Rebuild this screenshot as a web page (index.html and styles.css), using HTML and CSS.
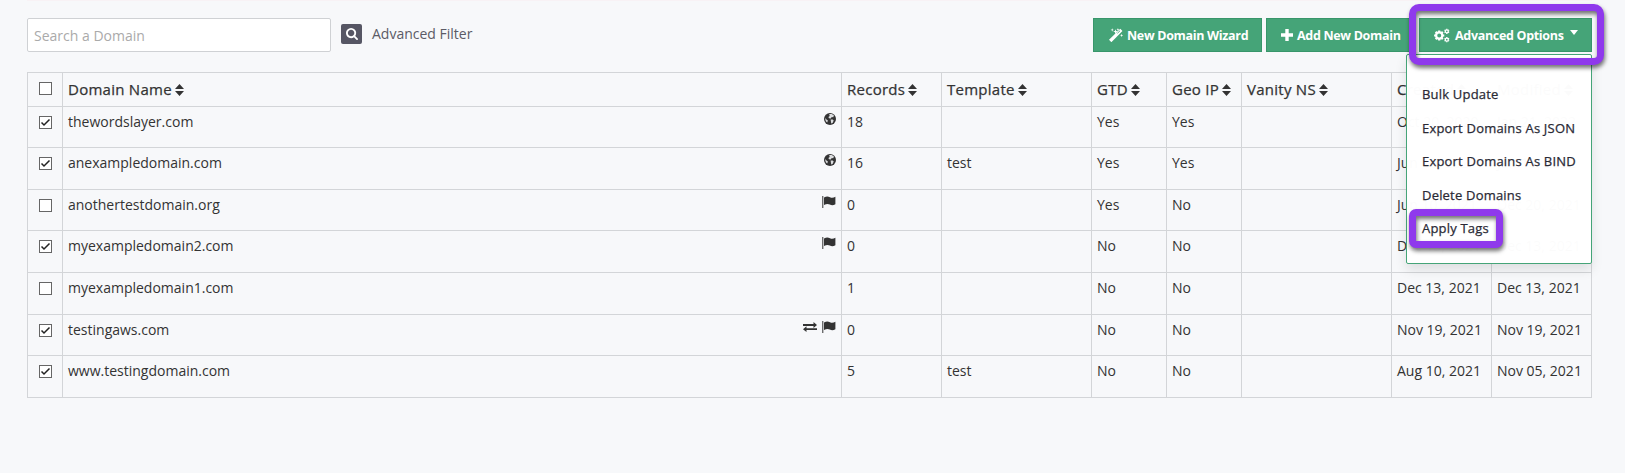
FILE: index.html
```html
<!DOCTYPE html>
<html lang="en">
<head>
    <meta charset="UTF-8">
    <meta name="viewport" content="width=device-width, initial-scale=1.0">
    <title>Domains</title>
    <link rel="stylesheet" href="styles.css">
</head>
<body>
    <!-- Icon set -->
    <svg class="icon-defs" width="0" height="0">
        <symbol id="i-search" viewBox="0 0 1664 1664"><path d="M1152 704q0-185-131.500-316.500t-316.500-131.500-316.500 131.500-131.500 316.500 131.500 316.500 316.500 131.500 316.500-131.500 131.500-316.500zm512 832q0 52-38 90t-90 38q-54 0-90-38l-343-342q-179 124-399 124-143 0-273.500-55.500t-225-150-150-225-55.500-273.500 55.500-273.500 150-225 225-150 273.500-55.500 273.500 55.500 225 150 150 225 55.500 273.500q0 220-124 399l343 343q37 37 37 90z"/></symbol>
        <symbol id="i-sort" viewBox="0 0 9 12"><path d="M0 5 4.500 0 9 5zM0 7h9l-4.500 5z"/></symbol>
        <symbol id="i-globe" viewBox="0 0 12 12"><circle cx="6" cy="6" r="6"/><path class="cut" d="M5.200 1 7.800.9 10 2.400 9.200 4.300 7.700 4.100 6.800 5.500 5 5.200 4.400 3.900 5.700 3.100zM6.600 6.600 8.700 6.400 9.700 7.600 8.600 10 7.200 10.600 6.900 8.600zM1 5.100 2.500 6.500 3.900 7.600 3.200 9.600 1.800 8.300z"/></symbol>
        <symbol id="i-flag" viewBox="0 0 14 12"><path d="M0.300 0h1v12h-1zM2 1.500C4.500.2 6 .3 8 1.300c2 .9 3.500.5 5.400-.5v7.400c-2 1.100-3.600 1.300-5.600.4C6 7.700 4.300 7.900 2 9.100z"/></symbol>
        <symbol id="i-exchange" viewBox="0 0 14 10"><path d="M0 2h10.500V0L14 3l-3.500 3V4H0zM14 6.200H3.500V4.300L0 7.200l3.500 2.800V8.100H14z"/></symbol>
        <symbol id="i-magic" viewBox="0 0 13 13"><path d="M0 11 10.500.8l2 2L2.200 13.200zM3 .2l.4 1.200 1.200.4-1.200.4L3 3.400l-.4-1.200-1.200-.4 1.200-.4zM6 1.100l.6 1.700 1.700.5-1.700.6L6 5.600l-.5-1.700-1.600-.6 1.600-.5zM8.300.1l.4 1 1 .4-1 .4-.4 1-.4-1-1-.4 1-.4zM11.700 5.400l.4 1.100 1.100.4-1.100.4-.4 1.200-.4-1.200-1.200-.4 1.200-.4z"/><path class="slit" d="M7.800 4.900 10.300 2.500"/></symbol>
        <symbol id="i-plus" viewBox="0 0 12 12"><path d="M4.300 0h3.400v4.300H12v3.400H7.700V12H4.300V7.700H0V4.300h4.300z"/></symbol>
        <symbol id="i-cogs" viewBox="0 0 16 14"><circle cx="5.200" cy="7" r="3.100" class="ring"/><path class="teeth" d="M5.200 1.900v2M5.200 10.100v2M.1 7h2M8.300 7h2M1.600 3.400 3 4.800M7.400 9.200l1.400 1.400M8.800 3.400 7.400 4.800M3 9.200l-1.400 1.400"/><circle cx="12.800" cy="2.800" r="1.500" class="ring small"/><path class="teeth small" d="M12.800.2v1M12.800 4.400v1M10.500 1.500l.9.500M14.200 3.600l.9.500M15.100 1.500l-.9.500M11.400 3.600l-.9.500"/><circle cx="12.800" cy="11.200" r="1.500" class="ring small"/><path class="teeth small" d="M12.800 8.600v1M12.800 12.800v1M10.500 9.900l.9.500M14.200 12l.9.500M15.100 9.900l-.9.500M11.400 12l-.9.500"/></symbol>
    </svg>

    <div class="page">
        <!-- Toolbar -->
        <div class="toolbar">
            <input type="text" class="search-input" placeholder="Search a Domain">
            <a class="advanced-filter">
                <span class="filter-icon"><svg><use href="#i-search"/></svg></span>
                Advanced Filter
            </a>
            <div class="actions">
                <button class="btn"><svg class="magic"><use href="#i-magic"/></svg>New Domain Wizard</button>
                <button class="btn btn-add"><svg class="plus"><use href="#i-plus"/></svg>Add New Domain</button>
                <div class="dropdown">
                    <button class="btn btn-options"><svg class="cogs"><use href="#i-cogs"/></svg>Advanced Options<span class="caret"></span></button>
                    <ul class="dropdown-menu">
                        <li>Bulk Update</li>
                        <li>Export Domains As JSON</li>
                        <li>Export Domains As BIND</li>
                        <li>Delete Domains</li>
                        <li class="marked">Apply Tags</li>
                    </ul>
                    <div class="marker"></div>
                </div>
            </div>
        </div>

        <!-- Domains -->
        <table class="domains">
            <colgroup>
                <col class="c-check"><col class="c-name"><col class="c-date"><col class="c-wide"><col class="c-flag"><col class="c-flag"><col class="c-wide"><col class="c-date"><col class="c-date">
            </colgroup>
            <thead>
                <tr>
                    <th><span class="check"></span></th>
                    <th>Domain Name<svg class="sort"><use href="#i-sort"/></svg></th>
                    <th>Records<svg class="sort"><use href="#i-sort"/></svg></th>
                    <th>Template<svg class="sort"><use href="#i-sort"/></svg></th>
                    <th>GTD<svg class="sort"><use href="#i-sort"/></svg></th>
                    <th>Geo IP<svg class="sort"><use href="#i-sort"/></svg></th>
                    <th>Vanity NS<svg class="sort"><use href="#i-sort"/></svg></th>
                    <th>Created<svg class="sort"><use href="#i-sort"/></svg></th>
                    <th>Modified<svg class="sort"><use href="#i-sort"/></svg></th>
                </tr>
            </thead>
            <tbody>
                <tr class="short">
                    <td><span class="check"><svg viewBox="0 0 11 11"><path d="M1.500 5.500 4 8l5.500-5.500"/></svg></span></td>
                    <td><div class="name">thewordslayer.com<span class="tags"><svg class="globe"><use href="#i-globe"/></svg></span></div></td>
                    <td>18</td><td></td><td>Yes</td><td>Yes</td><td></td><td>Oct 20, 2020</td><td>Jan 21, 2022</td>
                </tr>
                <tr>
                    <td><span class="check"><svg viewBox="0 0 11 11"><path d="M1.500 5.500 4 8l5.500-5.500"/></svg></span></td>
                    <td><div class="name">anexampledomain.com<span class="tags"><svg class="globe"><use href="#i-globe"/></svg></span></div></td>
                    <td>16</td><td>test</td><td>Yes</td><td>Yes</td><td></td><td>Jun 10, 2021</td><td>Jan 10, 2022</td>
                </tr>
                <tr class="short">
                    <td><span class="check"></span></td>
                    <td><div class="name">anothertestdomain.org<span class="tags"><svg class="flag"><use href="#i-flag"/></svg></span></div></td>
                    <td>0</td><td></td><td>Yes</td><td>No</td><td></td><td>Jun 10, 2021</td><td>Dec 20, 2021</td>
                </tr>
                <tr>
                    <td><span class="check"><svg viewBox="0 0 11 11"><path d="M1.500 5.500 4 8l5.500-5.500"/></svg></span></td>
                    <td><div class="name">myexampledomain2.com<span class="tags"><svg class="flag"><use href="#i-flag"/></svg></span></div></td>
                    <td>0</td><td></td><td>No</td><td>No</td><td></td><td>Dec 13, 2021</td><td>Dec 13, 2021</td>
                </tr>
                <tr>
                    <td><span class="check"></span></td>
                    <td><div class="name">myexampledomain1.com</div></td>
                    <td>1</td><td></td><td>No</td><td>No</td><td></td><td>Dec 13, 2021</td><td>Dec 13, 2021</td>
                </tr>
                <tr class="short">
                    <td><span class="check"><svg viewBox="0 0 11 11"><path d="M1.500 5.500 4 8l5.500-5.500"/></svg></span></td>
                    <td><div class="name">testingaws.com<span class="tags"><svg class="exchange"><use href="#i-exchange"/></svg><svg class="flag"><use href="#i-flag"/></svg></span></div></td>
                    <td>0</td><td></td><td>No</td><td>No</td><td></td><td>Nov 19, 2021</td><td>Nov 19, 2021</td>
                </tr>
                <tr>
                    <td><span class="check"><svg viewBox="0 0 11 11"><path d="M1.500 5.500 4 8l5.500-5.500"/></svg></span></td>
                    <td><div class="name">www.testingdomain.com</div></td>
                    <td>5</td><td>test</td><td>No</td><td>No</td><td></td><td>Aug 10, 2021</td><td>Nov 05, 2021</td>
                </tr>
            </tbody>
        </table>
    </div>
</body>
</html>
```

FILE: styles.css
```css
:root {
    --green: #45a478;
    --green-dark: #38966b;
    --purple: #8f39ec;
    --line: #d3d5d8;
    --text: #333;
    --bg: #f7f8fa;
}

* {
    box-sizing: border-box;
    margin: 0;
    padding: 0;
}

body {
    font-family: 'Open Sans', 'Noto Sans', sans-serif;
    font-size: 14px;
    line-height: 20px;
    color: var(--text);
    background: var(--bg);
    overflow: hidden;
}

svg {
    fill: currentColor;
    flex: none;
}

.icon-defs {
    position: absolute;
}

.page {
    margin: 0 33px 0 27px;
    border-top: 1px solid #f8f2f5;
    padding-top: 17px;
}

/* Toolbar */
.toolbar {
    display: flex;
    height: 34px;
    margin-bottom: 20px;
}

.search-input {
    width: 304px;
    height: 34px;
    padding: 0 6px;
    border: 1px solid #cfd1d4;
    border-radius: 2px;
    background: white;
    font: inherit;
}

.search-input::placeholder {
    color: #aaa;
}

.advanced-filter {
    display: flex;
    align-items: center;
    gap: 10px;
    height: 32px;
    margin-left: 10px;
    color: #5b5b66;
}

.filter-icon {
    display: flex;
    align-items: center;
    justify-content: center;
    width: 21px;
    height: 20px;
    border-radius: 2px;
    background: #565664;
    color: white;
}

.filter-icon svg {
    width: 12px;
    height: 12px;
}

.actions {
    display: flex;
    gap: 4px;
    margin-left: auto;
}

.btn {
    display: flex;
    align-items: center;
    width: 169px;
    height: 34px;
    padding: 1px 0 0 15px;
    border: 1px solid var(--green-dark);
    background: var(--green);
    color: white;
    font: 700 12.500px/20px 'Open Sans', 'Noto Sans', sans-serif;
    letter-spacing: -0.32px;
    white-space: nowrap;
}

.btn-add {
    width: 149px;
    padding-left: 14px;
}

.btn-options {
    width: 173px;
    padding-left: 14px;
}

.magic {
    width: 14px;
    height: 14px;
    margin: -2px 4px 0 0;
}

.plus {
    width: 12px;
    height: 12px;
    margin: -2px 4px 0 0;
}

.cogs {
    width: 16px;
    height: 15px;
    margin: -1px 5px 0 0;
}

.slit,
.ring,
.teeth {
    fill: none;
    stroke: white;
    stroke-width: 2.2;
}

.slit {
    stroke: var(--green);
    stroke-width: 0.8;
}

.ring.small,
.teeth.small {
    stroke-width: 1.3;
}

.caret {
    margin: -7px 0 0 6px;
    border: 4.5px solid transparent;
    border-top: 5px solid white;
    border-bottom: 0;
}

/* Dropdown */
.dropdown {
    position: relative;
}

.dropdown-menu {
    position: absolute;
    top: 36px;
    right: 0;
    width: 186px;
    height: 210px;
    padding: 23px 0 0 15px;
    border: 1px solid var(--green);
    border-radius: 2px;
    background: rgba(255, 255, 255, 0.985);
    box-shadow: 0 6px 12px rgba(0, 0, 0, 0.1);
    list-style: none;
    font-size: 13px;
    font-weight: 500;
    line-height: 33.500px;
    letter-spacing: 0.2px;
    -webkit-text-stroke: 0.25px currentColor;
    white-space: nowrap;
    color: #2a2a35;
}

.marker,
.marked::before {
    content: '';
    position: absolute;
    box-sizing: border-box;
    border: 7px solid var(--purple);
    border-radius: 10px;
    filter: drop-shadow(1px 3px 2px rgba(0, 0, 0, 0.55));
}

.marker {
    top: -14px;
    left: -10px;
    width: 195px;
    height: 61px;
}

.marked::before {
    top: 154px;
    left: 2px;
    width: 94px;
    height: 39px;
    border-radius: 7px;
}

/* Table */
.domains {
    width: 1565px;
    border-collapse: collapse;
    table-layout: fixed;
}

.domains th,
.domains td {
    border: 1px solid var(--line);
    padding: 5px 0 0 5px;
    text-align: left;
    vertical-align: top;
    white-space: nowrap;
}

.domains th {
    height: 34px;
    padding-top: 6px;
    font-size: 15px;
    font-weight: 500;
    letter-spacing: 0.26px;
    -webkit-text-stroke: 0.25px currentColor;
}

.domains td {
    height: 42px;
}

.domains .short td {
    height: 41px;
}

.c-check { width: 35px; }
.c-name { width: 779px; }
.c-date { width: 100px; }
.c-wide { width: 150px; }
.c-flag { width: 75px; }

.sort {
    width: 9px;
    height: 12px;
    margin-left: 3px;
    vertical-align: -1px;
}

.check {
    display: block;
    width: 13px;
    height: 13px;
    margin: 4px 0 0 6px;
    border: 1px solid #666;
    background: white;
}

th .check {
    margin-top: 3px;
}

.check svg {
    display: block;
    width: 11px;
    height: 11px;
    fill: none;
    stroke: #222;
    stroke-width: 1.5;
}

.name {
    display: flex;
    justify-content: space-between;
    padding-right: 5px;
}

.tags {
    display: flex;
    gap: 5px;
    padding-top: 1px;
}

.globe {
    width: 12px;
    height: 12px;
}

.cut {
    fill: #dcdee0;
}

.flag {
    width: 14px;
    height: 12px;
}

.exchange {
    width: 14px;
    height: 10px;
    margin-top: 1px;
}
```
